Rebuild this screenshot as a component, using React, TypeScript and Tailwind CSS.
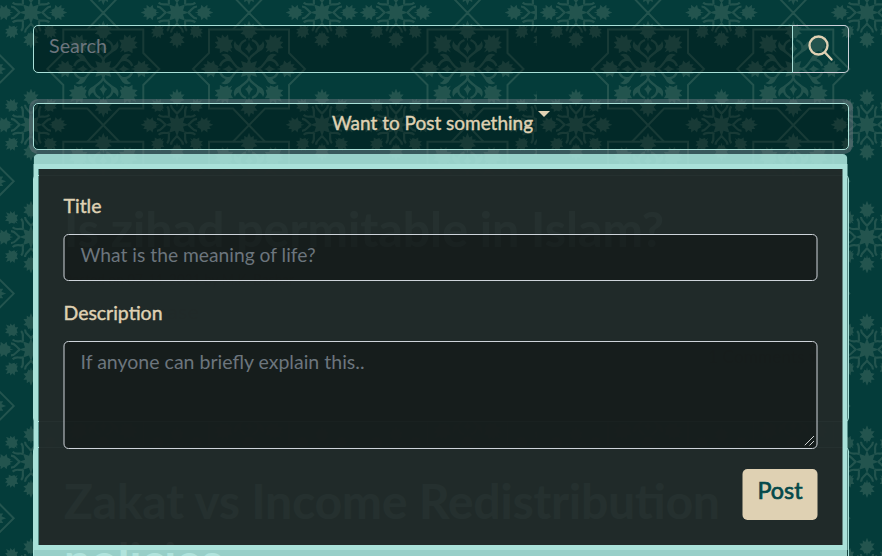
import React from "react";

const SEAM = 537;
const ROW = 112.3;
const LEFT = { flowers: [31, 177, 322, 396, 541], stars: [-42.3, 103.3, 249, 467.5] };
const RIGHT = { flowers: [576, 721.5, 867], stars: [648, 793.3] };
const ROWS = [-1, 0, 1, 2, 3, 4, 5];
const EIGHT = [0, 45, 90, 135, 180, 225, 270, 315];

function Leaf({ d, s }: { d: number; s: number }) {
  return (
    <path
      transform={`translate(0 ${-d}) scale(${s})`}
      d="M0-11 2-6 5-8 5-4 9-4 6 0 9 3 5 4 3 8 1 7 0 11-1 7-3 8-5 4-9 3-6 0-9-4-5-4-5-8-2-6Z"
      fill="currentColor"
    />
  );
}

function Burst() {
  return (
    <path
      d="M0-12 2-6 8-8 6-2 12 0 6 2 8 8 2 6 0 12-2 6-8 8-6 2-12 0-6-2-8-8-2-6Z"
      fill="currentColor"
    />
  );
}

function Flower() {
  return (
    <>
      <Burst />
      {EIGHT.map((a) => (
        <g key={a} transform={`rotate(${a})`}>
          <Leaf d={27} s={a % 90 ? 0.75 : 0.85} />
          <path
            d="M0-11C-2-15-6-15-6-20M0-11C2-15 6-15 6-20"
            fill="none"
            stroke="currentColor"
            strokeWidth="2.2"
          />
        </g>
      ))}
    </>
  );
}

function Star() {
  return (
    <>
      <path
        d="M-16-39.5H-40V-16L-56 0-40 16V39.5H-16L16 72.8M16-39.5H40V-16L56 0 40 16V39.5H16L-16 72.8M-16-39.5H16"
        fill="none"
        stroke="currentColor"
        strokeWidth="2"
      />
      <Burst />
      {[0, 90, 180, 270].map((a) => (
        <g key={a} transform={`rotate(${a})`}>
          <Leaf d={38} s={0.95} />
          <path
            d="M0-9C-2-16-11-15-9-23Q-8-27-3-29M0-9C2-16 11-15 9-23Q8-27 3-29"
            fill="none"
            stroke="currentColor"
            strokeWidth="2.4"
          />
          <path
            d="M0-27Q-1-22-4-20Q-1-19 0-15Q1-19 4-20Q1-22 0-27ZM-9-23Q-13-24-14-28Q-17-23-13-19L-8-16ZM9-23Q13-24 14-28Q17-23 13-19L8-16Z"
            fill="currentColor"
          />
          <g transform="rotate(45)">
            <Leaf d={35} s={1.05} />
          </g>
        </g>
      ))}
    </>
  );
}

function Motifs({ flowers, stars }: { flowers: number[]; stars: number[] }) {
  return (
    <>
      {ROWS.map((r) => (
        <g key={r} transform={`translate(0 ${r * ROW})`}>
          {flowers.map((x) => (
            <g key={x} transform={`translate(${x} 12.5)`}>
              <Flower />
            </g>
          ))}
          {stars.map((x) => (
            <g key={x} transform={`translate(${x} 69)`}>
              <Star />
            </g>
          ))}
        </g>
      ))}
    </>
  );
}

function Pattern() {
  return (
    <svg className="absolute inset-0 text-[#2b5a54] opacity-80" width="882" height="556" aria-hidden="true">
      <clipPath id="left-tile">
        <rect width={SEAM} height="556" />
      </clipPath>
      <clipPath id="right-tile">
        <rect x={SEAM} width="345" height="556" />
      </clipPath>
      <g clipPath="url(#left-tile)">
        <Motifs {...LEFT} />
      </g>
      <g clipPath="url(#right-tile)">
        <Motifs {...RIGHT} />
      </g>
    </svg>
  );
}

type FitProps = { width: number; size: number; y: number; weight?: number; children: string };

function Fit({ width, size, y, weight = 0, children }: FitProps) {
  return (
    <svg className="block overflow-visible" width={width} height={y + 6}>
      <text
        x="0"
        y={y}
        fontSize={size}
        textLength={width}
        lengthAdjust="spacingAndGlyphs"
        fill="currentColor"
        stroke="currentColor"
        strokeWidth={weight}
      >
        {children}
      </text>
    </svg>
  );
}

function Posts() {
  return (
    <div className="mt-[25px] flex flex-col gap-[25px] text-black">
      <article className="h-[247px] rounded border border-[#a9e1d9] bg-[#04302e] px-[30px] pt-[29px]">
        <div className="font-bold text-[#a9e1d9]">
          <Fit width={600} size={48} y={42}>Is zihad permitable in Islam?</Fit>
        </div>
        <div className="mt-3">
          <Fit width={230} size={16} y={20}>Posted on 07-11-2021 by M.K. Bashar</Fit>
        </div>
        <div className="mt-2">
          <Fit width={135} size={20} y={20}>Explain please</Fit>
        </div>
        <div className="mt-[22px] flex justify-end">
          <Fit width={110} size={18} y={16}>1 Comments ▾</Fit>
        </div>
      </article>
      <article className="h-[247px] rounded border border-[#a9e1d9] bg-[#04302e] px-[30px] pt-[29px] font-bold text-[#a9e1d9]">
        <Fit width={656} size={48} y={42}>Zakat vs Income Redistribution</Fit>
        <div className="mt-[11px] text-white">
          <Fit width={158} size={48} y={42}>policies</Fit>
        </div>
      </article>
    </div>
  );
}

export default function App() {
  return (
    <main className="relative h-[556px] w-[882px] overflow-hidden bg-[#043c3a] font-[Lato,sans-serif]">
      <Pattern />
      <div className="relative px-[33px] pt-[25px]">
        <div className="flex h-12">
          <div className="w-[760px] rounded-l-[5px] border border-[#a9e1d9] bg-black/30 pl-[15px] pt-[4px] text-[#6c757d]">
            <Fit width={58} size={20} y={23}>Search</Fit>
          </div>
          <button className="-ml-px flex w-[57px] items-center justify-center rounded-r-[5px] border border-[#ccd2da] border-l-[#a9e1d9] pb-[2px]">
            <svg width="26" height="26" viewBox="0 0 26 26" fill="none" stroke="#dfd1b3" strokeWidth="2.4" strokeLinecap="round">
              <circle cx="10.5" cy="10.5" r="9" />
              <path d="m17 17.5 6.5 7" />
            </svg>
          </button>
        </div>
        <div className="relative mt-[30px]">
          <button className="flex h-[47px] w-full justify-center rounded-[5px] border border-[#a9e1d9] bg-black/30 pt-[4px] text-[#dfd1b3] shadow-[0_0_0_4px_rgba(108,117,125,0.5)]">
            <Fit width={201} size={20} y={22} weight={0.45}>Want to Post something</Fit>
            <span className="ml-[5px] mt-[3px] border-x-[6px] border-t-[6px] border-x-transparent border-t-[#dfd1b3]" />
          </button>
          <div className="absolute left-px top-[51px] z-10 w-[814px] -translate-x-[0.5px] rounded-[5px] border-y-[10px] border-[#a9e1d9]/90">
            <form className="h-[386px] border-5 border-[#a9e1d9] bg-[#212a29]/97 bg-clip-padding px-[25px] pt-[25px] text-[#dfd1b3]">
              <Fit width={38} size={20} y={19} weight={0.45}>Title</Fit>
              <div className="mt-[15px] h-[47px] rounded-[5px] border border-[#ced4da] bg-black/30 pl-[16px] pt-[3px] text-[#6c757d]">
                <Fit width={235} size={20} y={24}>What is the meaning of life?</Fit>
              </div>
              <div className="mt-[20px]">
                <Fit width={99} size={20} y={19} weight={0.45}>Description</Fit>
              </div>
              <div className="relative mt-[15px] h-[108px] rounded-[5px] border border-[#ced4da] bg-black/30 pl-[16px] pt-[3px] text-[#6c757d]">
                <Fit width={284} size={20} y={24}>If anyone can briefly explain this..</Fit>
                <svg className="absolute bottom-[2px] right-[2px]" width="10" height="10" stroke="#ccd0cf" strokeWidth="1">
                  <path d="M0 9.5 9.5 0M5 9.5 9.5 5" />
                </svg>
              </div>
              <div className="mt-[20px] flex justify-end">
                <button type="button" className="flex h-[51px] w-[75px] items-start rounded-[5px] bg-[#dfd1b3] pl-[15px] pt-[7px] text-[#04494a]">
                  <Fit width={45} size={23} y={23} weight={0.7}>Post</Fit>
                </button>
              </div>
            </form>
          </div>
        </div>
        <Posts />
      </div>
    </main>
  );
}
